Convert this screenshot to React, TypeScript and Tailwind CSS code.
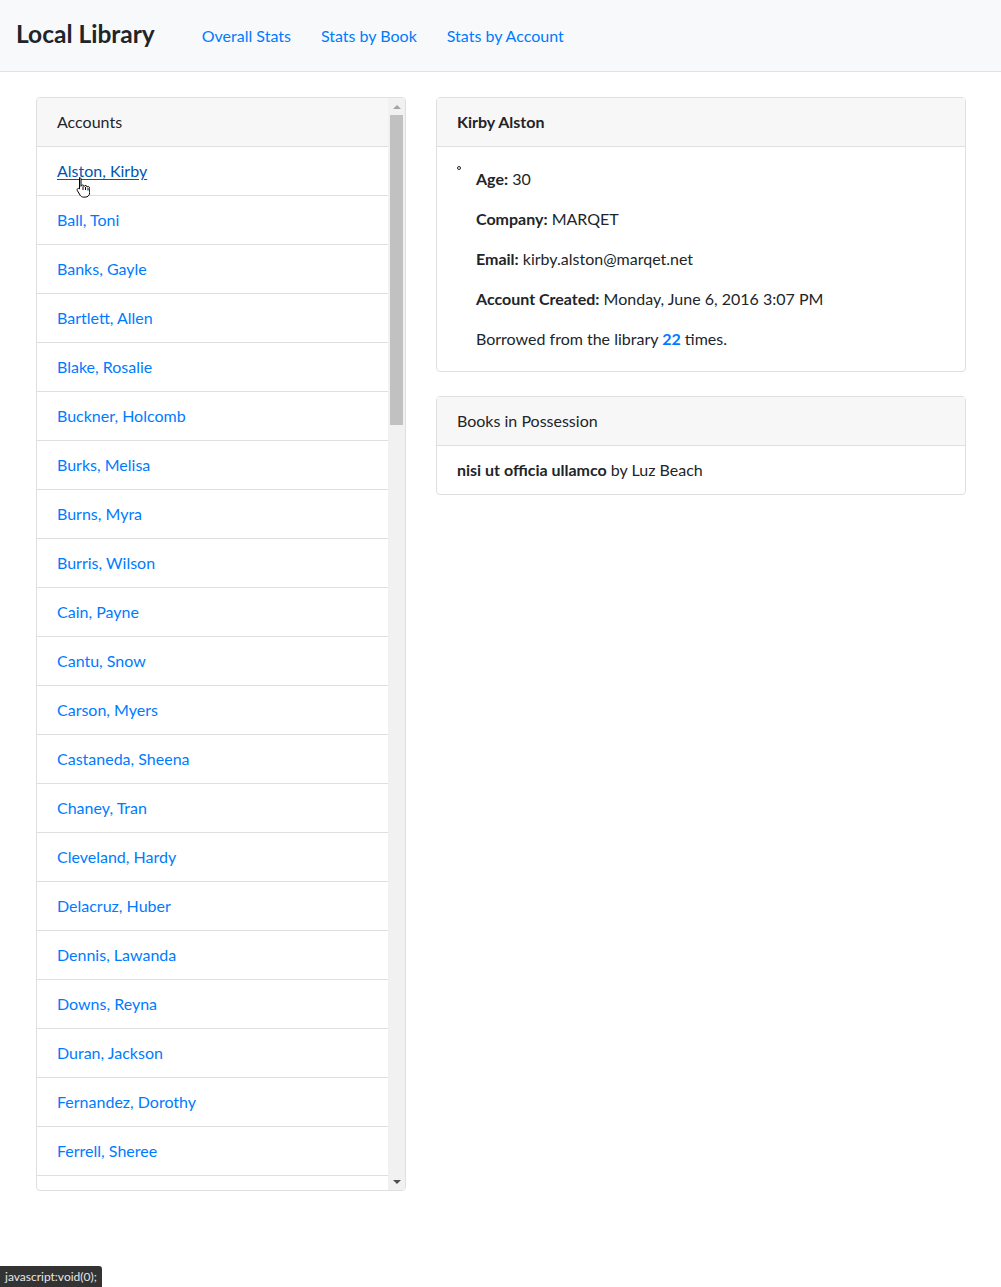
const accounts = [
  "Alston, Kirby",
  "Ball, Toni",
  "Banks, Gayle",
  "Bartlett, Allen",
  "Blake, Rosalie",
  "Buckner, Holcomb",
  "Burks, Melisa",
  "Burns, Myra",
  "Burris, Wilson",
  "Cain, Payne",
  "Cantu, Snow",
  "Carson, Myers",
  "Castaneda, Sheena",
  "Chaney, Tran",
  "Cleveland, Hardy",
  "Delacruz, Huber",
  "Dennis, Lawanda",
  "Downs, Reyna",
  "Duran, Jackson",
  "Fernandez, Dorothy",
  "Ferrell, Sheree",
]

const navLinks = ["Overall Stats", "Stats by Book", "Stats by Account"]

function HandCursor() {
  return (
    <svg width="14" height="22" viewBox="0 0 14 22" className="absolute left-[76px] top-[176px]">
      <path
        d="M3.5 1.5c.8 0 1.5.6 1.5 1.4v7.4c.2-.9 1-1.4 1.8-1.3.8.1 1.3.7 1.3 1.5.3-.7 1-1.1 1.8-1 .8.2 1.2.8 1.2 1.6.4-.5 1.1-.7 1.7-.4.6.3.9.9.9 1.6v4.4c0 2.6-2 4.4-4.5 4.4H7.5c-1.5 0-2.6-.7-3.4-1.9L1.3 14.5c-.4-.7-.2-1.5.4-1.9.6-.4 1.4-.2 1.8.3V2.9c0-.8 0-1.4 0-1.4z"
        fill="#fff"
        stroke="#000"
        strokeWidth="1"
      />
      <path d="M7 10.5v3.5M9.5 11v3M12 12v2.5" stroke="#000" strokeWidth="1" />
    </svg>
  )
}

function Scrollbar() {
  return (
    <div className="flex w-[17px] shrink-0 flex-col bg-[#f1f1f1]">
      <div className="flex h-[17px] items-center justify-center">
        <div className="h-0 w-0 border-x-[4px] border-b-[4px] border-x-transparent border-b-[#a3a3a3]" />
      </div>
      <div className="mx-[2px] h-[310px] bg-[#c1c1c1]" />
      <div className="flex-1" />
      <div className="flex h-[17px] items-center justify-center">
        <div className="h-0 w-0 border-x-[4px] border-t-[4px] border-x-transparent border-t-[#505050]" />
      </div>
    </div>
  )
}

export default function App() {
  return (
    <div className="relative min-h-[1287px] bg-white text-[16px] leading-6 text-[#212529]" style={{ fontFamily: "Lato, 'Liberation Sans', sans-serif" }}>
      {/* NAVBAR */}
      <nav className="flex h-[72px] items-center border-b border-[#dfe1e3] bg-[#f8f9fa] px-4">
        <a className="pb-[4px] text-[24.5px] font-bold leading-8 text-[#212529]">Local Library</a>
        <ul className="ml-[47px] flex gap-[30px] pt-[1px]">
          {navLinks.map((l) => (
            <li key={l}>
              <a className="text-[#007bff]">{l}</a>
            </li>
          ))}
        </ul>
      </nav>

      {/* MAIN */}
      <main className="flex items-start gap-[30px] pl-9 pr-[35px] pt-[25px]">
        {/* ACCOUNTS LIST */}
        <div className="flex h-[1094px] w-[370px] shrink-0 overflow-hidden rounded-[4px] border border-[#dfdfdf]">
          <div className="flex-1 overflow-hidden">
            <div className="border-b border-[#dfdfdf] bg-[#f7f7f7] px-5 py-3">Accounts</div>
            <ul>
              {accounts.map((name, i) => (
                <li key={name} className="border-b border-[#dfdfdf] px-5 py-3">
                  <a
                    className={
                      i === 0
                        ? "text-[#0056b3] underline underline-offset-2"
                        : "text-[#007bff]"
                    }
                  >
                    {name}
                  </a>
                </li>
              ))}
            </ul>
          </div>
          <Scrollbar />
        </div>

        {/* DETAILS */}
        <div className="flex flex-1 flex-col gap-6">
          <div className="rounded-[4px] border border-[#dfdfdf]">
            <div className="border-b border-[#dfdfdf] bg-[#f7f7f7] px-5 py-3 font-bold">Kirby Alston</div>
            <div className="flex p-5">
              <span className="mt-[-1px] h-[4px] w-[4px] shrink-0 rounded-full border border-[#212529]" />
              <div className="ml-[15px] flex flex-col gap-4">
                <p>
                  <b>Age:</b> 30
                </p>
                <p>
                  <b>Company:</b> MARQET
                </p>
                <p>
                  <b>Email:</b> kirby.alston@marqet.net
                </p>
                <p>
                  <b>Account Created:</b> Monday, June 6, 2016 3:07 PM
                </p>
                <p>
                  Borrowed from the library <b className="text-[#007bff]">22</b> times.
                </p>
              </div>
            </div>
          </div>

          <div className="rounded-[4px] border border-[#dfdfdf]">
            <div className="border-b border-[#dfdfdf] bg-[#f7f7f7] px-5 py-3">Books in Possession</div>
            <div className="px-5 py-3">
              <b>nisi ut officia ullamco</b> by Luz Beach
            </div>
          </div>
        </div>
      </main>

      <HandCursor />

      {/* STATUS BUBBLE */}
      <div className="absolute bottom-0 left-0 flex h-[21px] items-center rounded-tr-[3px] bg-[#333333] pl-[5px] pr-[5px] text-[12px] leading-none text-[#e6e6e6]">
        javascript:void(0);
      </div>
    </div>
  )
}
